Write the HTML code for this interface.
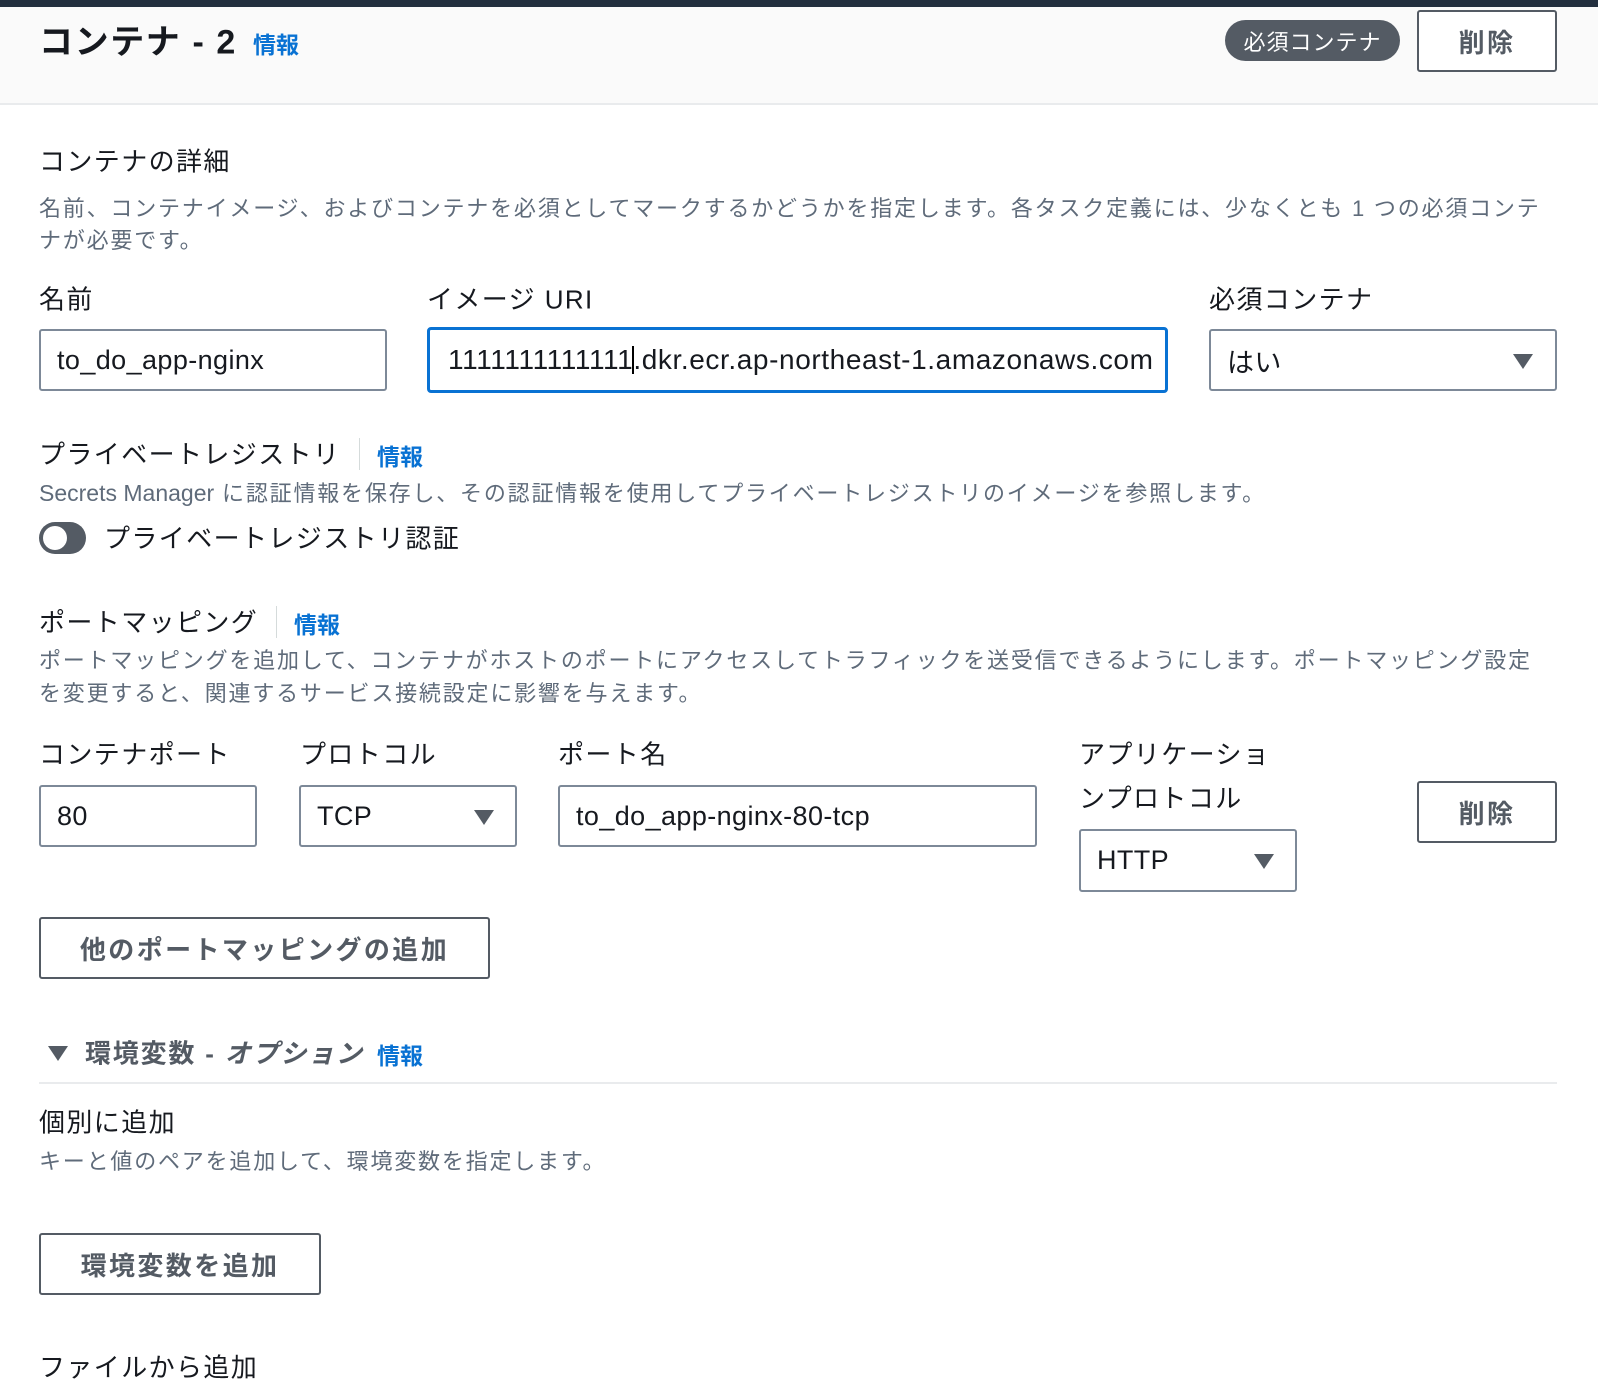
<!DOCTYPE html>
<html><head><meta charset="utf-8">
<style>
*{box-sizing:border-box;margin:0;padding:0}
body{width:1598px;height:1392px;background:#fff;position:relative;overflow:hidden;font-family:"Liberation Sans","Noto Sans CJK JP",sans-serif;color:#16191f}
.a{position:absolute;white-space:nowrap}
.c{transform:translateY(-50%)}
.info{color:#0972d3;font-weight:bold;font-size:23px}
.lab{font-size:26px;color:#16191f;letter-spacing:1.4px}
.desc{font-size:22px;color:#5f6b7a;letter-spacing:1.8px}
.inp{position:absolute;border:2px solid #7d8998;border-radius:3px;background:#fff;font-size:27px;letter-spacing:0.4px;display:flex;align-items:center;padding-left:16px;overflow:hidden}
.btn{position:absolute;border:2px solid #545b64;border-radius:3px;background:#fff;font-size:26px;font-weight:bold;color:#545b64;display:flex;align-items:center;justify-content:center;letter-spacing:2.4px}
.tri{position:absolute;width:0;height:0;border-left:10px solid transparent;border-right:10px solid transparent;border-top:15px solid #545b64}
.sep{position:absolute;width:1px;background:#d5dbdb}
</style></head><body>
<div class="a" style="left:0;top:0;width:1598px;height:7px;background:#232f3e"></div>
<div class="a" style="left:0;top:7px;width:1598px;height:98px;background:#fafafa;border-bottom:2px solid #e9ebed"></div>
<div class="a c" style="left:39px;top:39px;font-size:34px;font-weight:bold;letter-spacing:1.6px">コンテナ - 2</div>
<div class="a c info" style="left:253px;top:43px">情報</div>
<div class="a" style="left:1225px;top:20px;width:175px;height:41px;background:#545b64;border-radius:21px;color:#fff;font-size:22px;display:flex;align-items:center;justify-content:center;letter-spacing:1px">必須コンテナ</div>
<div class="btn" style="left:1417px;top:10px;width:140px;height:62px">削除</div>

<div class="a c lab" style="left:39px;top:160px">コンテナの詳細</div>
<div class="a c desc" style="left:39px;top:207px">名前、コンテナイメージ、およびコンテナを必須としてマークするかどうかを指定します。各タスク定義には、少なくとも 1 つの必須コンテ</div>
<div class="a c desc" style="left:39px;top:239px">ナが必要です。</div>

<div class="a c lab" style="left:39px;top:298px">名前</div>
<div class="a c lab" style="left:427px;top:298px">イメージ URI</div>
<div class="a c lab" style="left:1209px;top:298px">必須コンテナ</div>
<div class="inp" style="left:39px;top:329px;width:348px;height:62px">to_do_app-nginx</div>
<div class="inp" style="left:427px;top:327px;width:741px;height:66px;border:3px solid #0972d3;border-radius:4px;padding-left:18px;font-size:28px;letter-spacing:0.6px">1111111111111<span style="display:inline-block;width:2px;height:28px;background:#000;margin:0 -1px"></span>.dkr.ecr.ap-northeast-1.amazonaws.com</div>
<div class="inp" style="left:1209px;top:329px;width:348px;height:62px">はい</div>
<div class="tri" style="left:1513px;top:354px"></div>

<div class="a c lab" style="left:39px;top:453px">プライベートレジストリ</div>
<div class="sep" style="left:359px;top:438px;height:32px"></div>
<div class="a c info" style="left:377px;top:455px">情報</div>
<div class="a c desc" style="left:39px;top:492px"><span style="letter-spacing:0;font-size:23px">Secrets Manager</span> に認証情報を保存し、その認証情報を使用してプライベートレジストリのイメージを参照します。</div>
<div class="a" style="left:39px;top:522px;width:47px;height:32px;border-radius:16px;background:#545b64"></div>
<div class="a" style="left:43px;top:526px;width:24px;height:24px;border-radius:12px;background:#fff"></div>
<div class="a c lab" style="left:104px;top:537px">プライベートレジストリ認証</div>

<div class="a c lab" style="left:39px;top:621px">ポートマッピング</div>
<div class="sep" style="left:276px;top:606px;height:32px"></div>
<div class="a c info" style="left:294px;top:623px">情報</div>
<div class="a c desc" style="left:39px;top:659px">ポートマッピングを追加して、コンテナがホストのポートにアクセスしてトラフィックを送受信できるようにします。ポートマッピング設定</div>
<div class="a c desc" style="left:39px;top:692px">を変更すると、関連するサービス接続設定に影響を与えます。</div>

<div class="a c lab" style="left:39px;top:753px">コンテナポート</div>
<div class="a c lab" style="left:300px;top:753px">プロトコル</div>
<div class="a c lab" style="left:558px;top:753px">ポート名</div>
<div class="a c lab" style="left:1079px;top:753px">アプリケーショ</div>
<div class="a c lab" style="left:1079px;top:797px">ンプロトコル</div>
<div class="inp" style="left:39px;top:785px;width:218px;height:62px">80</div>
<div class="inp" style="left:299px;top:785px;width:218px;height:62px">TCP</div>
<div class="tri" style="left:474px;top:810px"></div>
<div class="inp" style="left:558px;top:785px;width:479px;height:62px">to_do_app-nginx-80-tcp</div>
<div class="inp" style="left:1079px;top:829px;width:218px;height:63px">HTTP</div>
<div class="tri" style="left:1254px;top:854px"></div>
<div class="btn" style="left:1417px;top:781px;width:140px;height:62px">削除</div>

<div class="btn" style="left:39px;top:917px;width:451px;height:62px">他のポートマッピングの追加</div>

<div class="a" style="left:48px;top:1046px;width:0;height:0;border-left:10px solid transparent;border-right:10px solid transparent;border-top:15px solid #545b64"></div>
<div class="a c" style="left:85px;top:1052px;font-size:26px;font-weight:bold;color:#545b64;letter-spacing:1.8px">環境変数 - <i>オプション</i></div>
<div class="a c info" style="left:377px;top:1054px">情報</div>
<div class="a" style="left:39px;top:1082px;width:1518px;height:2px;background:#e9ebed"></div>

<div class="a c lab" style="left:39px;top:1121px">個別に追加</div>
<div class="a c desc" style="left:39px;top:1160px">キーと値のペアを追加して、環境変数を指定します。</div>
<div class="btn" style="left:39px;top:1233px;width:282px;height:62px">環境変数を追加</div>
<div class="a c lab" style="left:39px;top:1366px">ファイルから追加</div>
</body></html>
